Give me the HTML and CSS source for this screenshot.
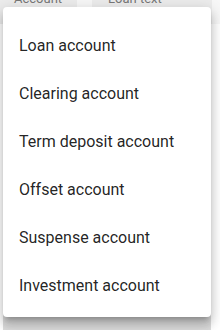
FILE: index.html
```html
<!DOCTYPE html>
<html lang="en">
<head>
    <meta charset="UTF-8">
    <meta name="viewport" content="width=device-width, initial-scale=1.0">
    <title>Account type</title>
    <link rel="stylesheet" href="styles.css">
</head>
<body>

    <div class="page">
        <div class="fields">
            <div class="field field-type">Account</div>
            <div class="field field-name">Loan text</div>
        </div>

        <div class="bar"></div>

        <ul class="menu">
            <li class="menu-item">Loan account</li>
            <li class="menu-item">Clearing account</li>
            <li class="menu-item">Term deposit account</li>
            <li class="menu-item">Offset account</li>
            <li class="menu-item">Suspense account</li>
            <li class="menu-item">Investment account</li>
        </ul>
    </div>

</body>
</html>
```

FILE: styles.css
```css
body {
    font-family: Roboto, "Liberation Sans", sans-serif;
    background-color: #ffffff;
    margin: 0;
    padding: 0;
}
.page {
    position: relative;
    height: 330px;
    overflow: hidden;
}
.fields {
    display: flex;
    margin-top: -17px;
    height: 41px;
    background-color: #f7f7f7;
}
.field {
    background-color: #ececec;
    color: #777;
    font-size: 13px;
    line-height: 13px;
    padding: 9px 0 0 14px;
    box-sizing: border-box;
}
.field-type {
    width: 77px;
}
.field-name {
    width: 120px;
    margin-left: 15px;
    padding-left: 16px;
}
.bar {
    margin: 284px 9px 0 3px;
    height: 40px;
    background-color: #dcdcdc;
    border-radius: 4px 4px 0 0;
}
.menu {
    position: absolute;
    top: 7px;
    left: 3px;
    width: 208px;
    margin: 0;
    padding: 15px 0 7px 0;
    list-style: none;
    background-color: white;
    border-radius: 4px;
    box-shadow: 0 5px 5px -3px rgba(0, 0, 0, 0.2), 0 8px 10px 1px rgba(0, 0, 0, 0.14), 0 3px 14px 2px rgba(0, 0, 0, 0.12);
}
.menu-item {
    height: 48px;
    line-height: 48px;
    padding: 0 16px;
    font-size: 16px;
    color: rgba(0, 0, 0, 0.87);
    white-space: nowrap;
}
```
